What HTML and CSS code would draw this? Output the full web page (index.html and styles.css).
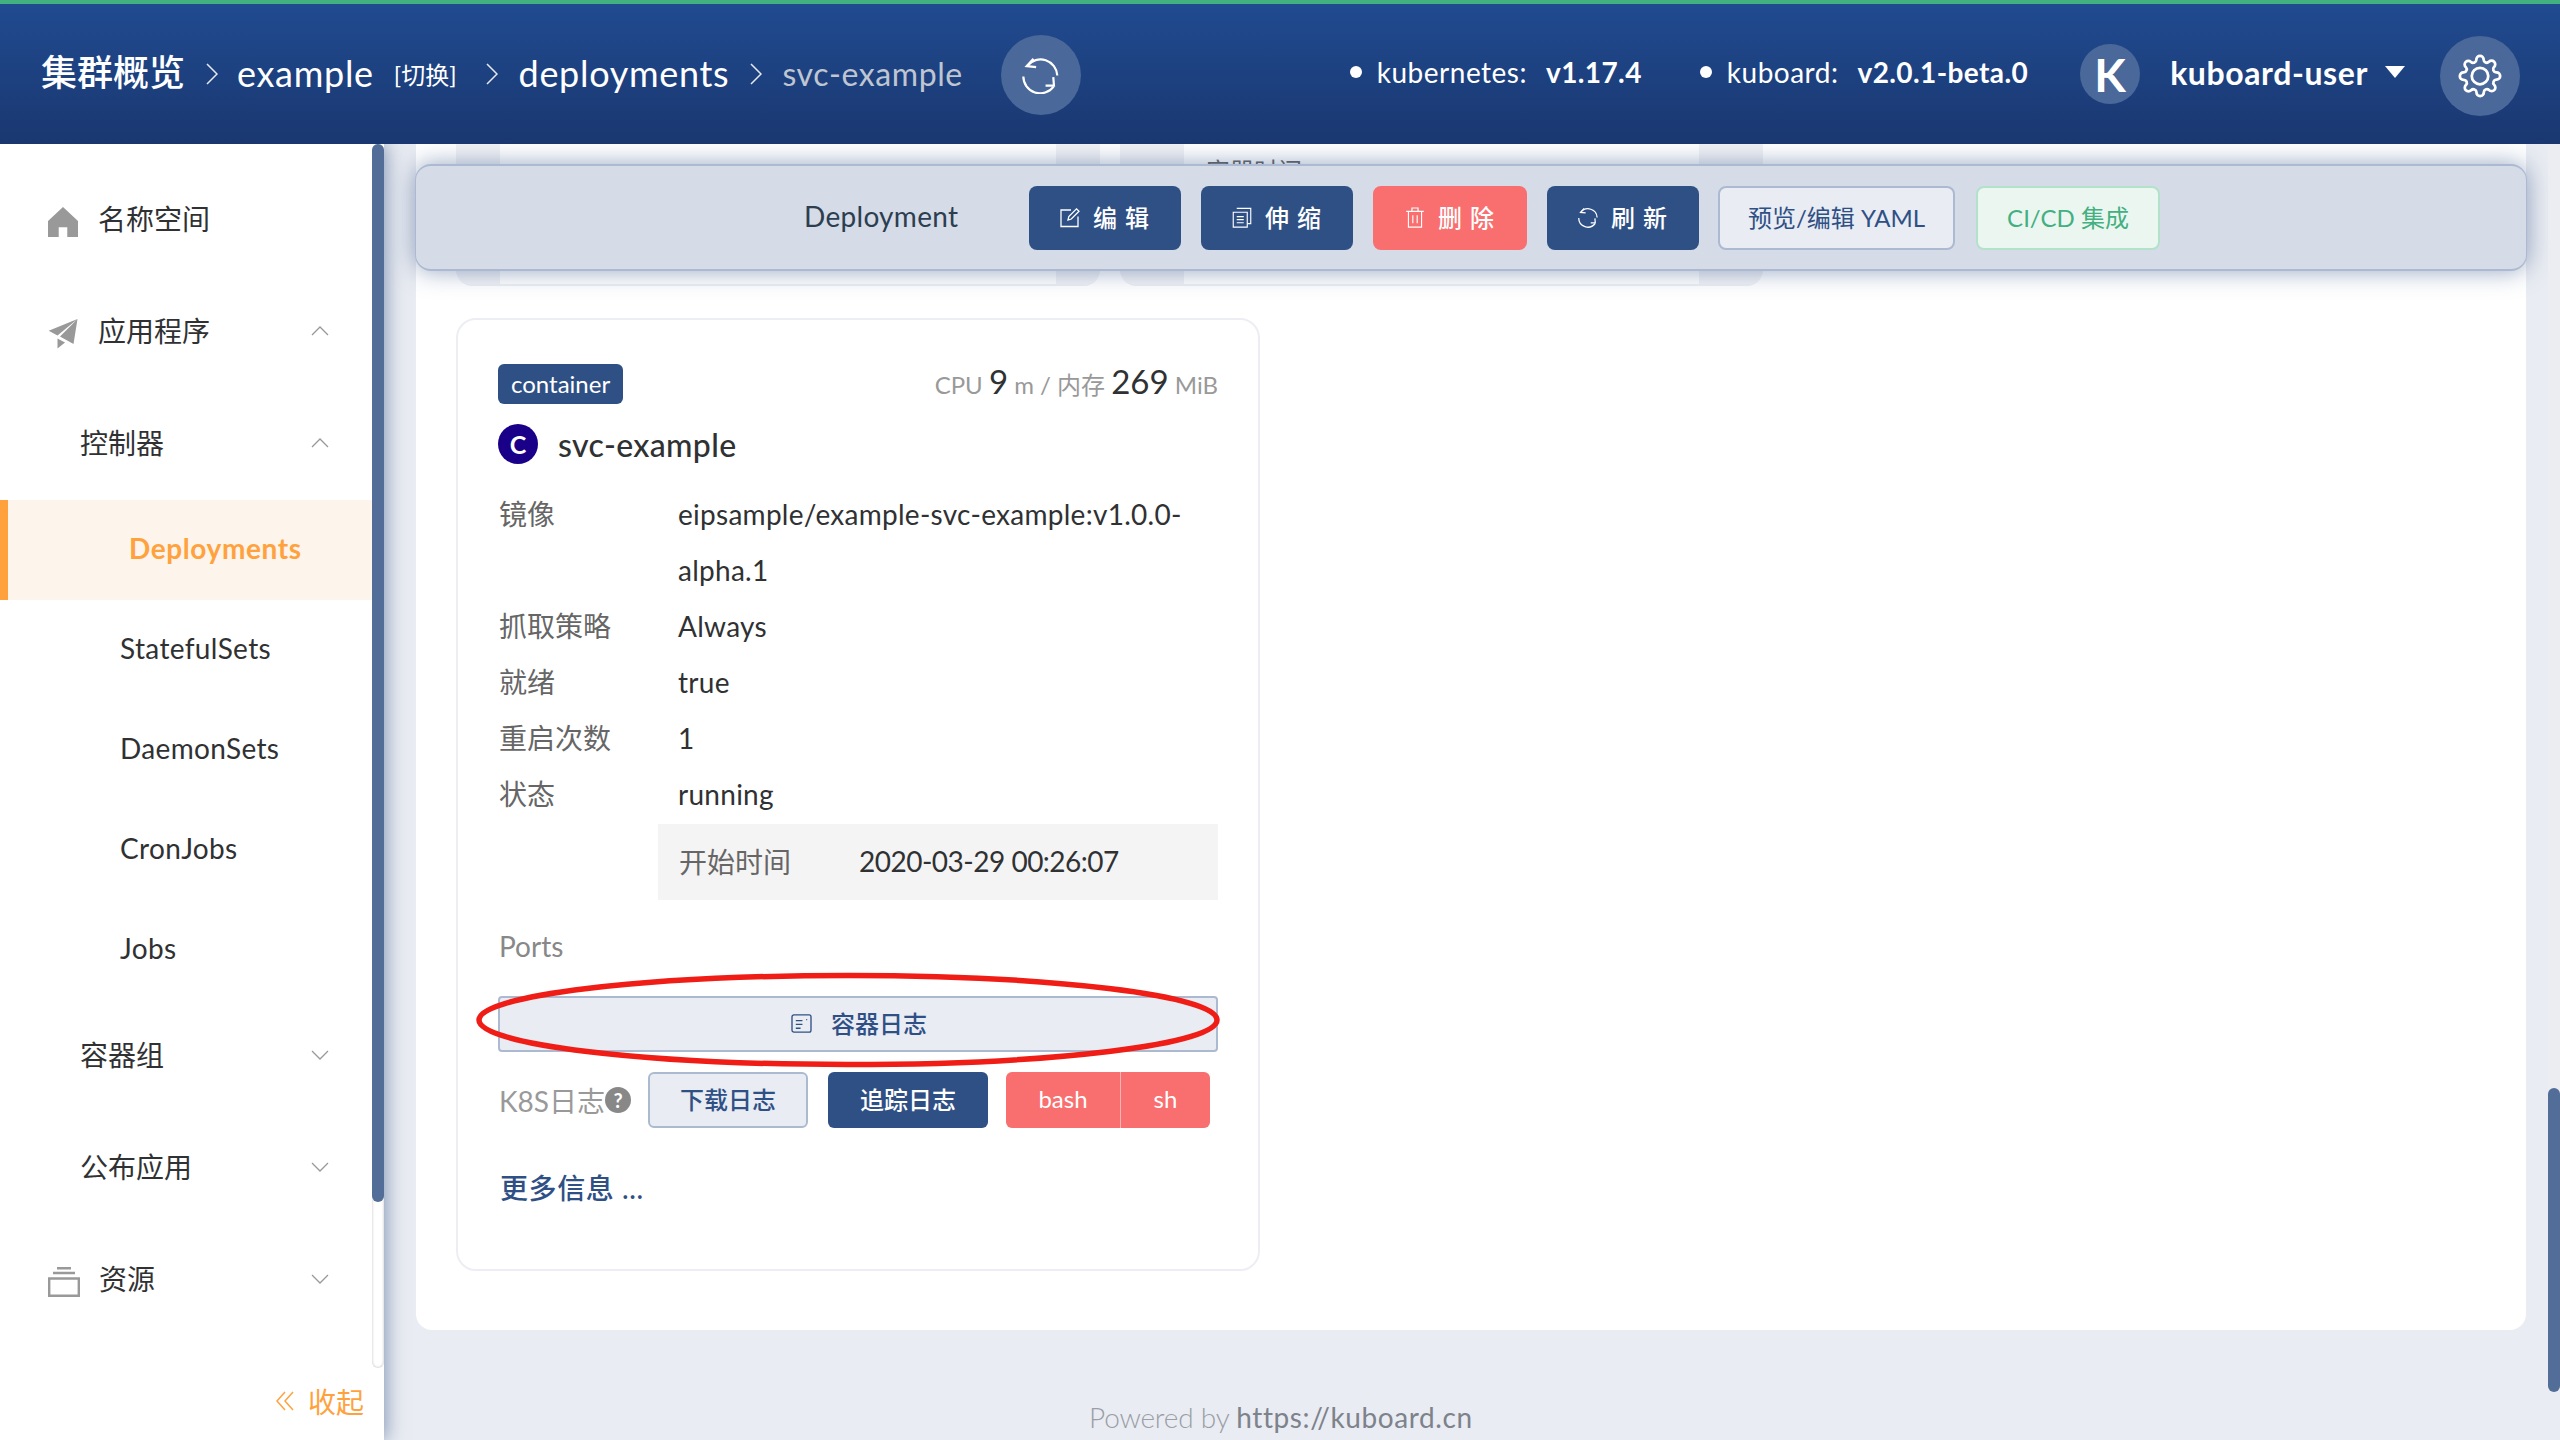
FILE: index.html
```html
<!DOCTYPE html>
<html lang="zh">
<head>
<meta charset="utf-8">
<title>Kuboard</title>
<link rel="stylesheet" href="styles.css">
</head>
<body>
<div class="app">
  <header class="topbar">
    <nav class="crumbs">
      <span class="crumb-root">集群概览</span>
      <svg class="crumb-sep sep-first" viewBox="0 0 12 24"><path d="M1 2l10 10L1 22"/></svg>
      <span class="crumb">example</span>
      <span class="crumb-switch">[切换]</span>
      <svg class="crumb-sep sep-wide" viewBox="0 0 12 24"><path d="M1 2l10 10L1 22"/></svg>
      <span class="crumb">deployments</span>
      <svg class="crumb-sep sep-last" viewBox="0 0 12 24"><path d="M1 2l10 10L1 22"/></svg>
      <span class="crumb-last">svc-example</span>
      <button class="round-btn refresh-top">
        <svg class="ic-refresh-lg" viewBox="70 70 110 110"><path d="M86 96A50 50 0 0 1 175 125"/><path d="M104 75L84 97L112 100"/><path d="M74 128A50 50 0 0 0 164 158"/><path d="M140 155L165 155L163 130"/></svg>
      </button>
    </nav>
    <div class="top-right">
      <span class="dot"></span><span class="ver-key">kubernetes:</span><span class="ver-val">v1.17.4</span>
      <span class="dot dot-2"></span><span class="ver-key">kuboard:</span><span class="ver-val">v2.0.1-beta.0</span>
      <span class="avatar">K</span>
      <span class="user">kuboard-user</span>
      <span class="caret"></span>
      <button class="round-btn gear-btn">
        <svg class="ic-gear" viewBox="0 0 24 24"><circle cx="12" cy="12" r="4.500"/><path d="M19.400 15a1.650 1.650 0 0 0 .33 1.820l.06.06a2 2 0 0 1 0 2.830 2 2 0 0 1-2.830 0l-.06-.06a1.650 1.650 0 0 0-1.820-.33 1.650 1.650 0 0 0-1 1.510V21a2 2 0 0 1-2 2 2 2 0 0 1-2-2v-.09A1.650 1.650 0 0 0 9 19.400a1.650 1.650 0 0 0-1.820.33l-.06.06a2 2 0 0 1-2.830 0 2 2 0 0 1 0-2.830l.06-.06a1.650 1.650 0 0 0 .33-1.820 1.650 1.650 0 0 0-1.510-1H3a2 2 0 0 1-2-2 2 2 0 0 1 2-2h.09A1.650 1.650 0 0 0 4.600 9a1.650 1.650 0 0 0-.33-1.820l-.06-.06a2 2 0 0 1 0-2.830 2 2 0 0 1 2.830 0l.06.06a1.650 1.650 0 0 0 1.820.33H9a1.650 1.650 0 0 0 1-1.510V3a2 2 0 0 1 2-2 2 2 0 0 1 2 2v.09a1.650 1.650 0 0 0 1 1.510 1.650 1.650 0 0 0 1.820-.33l.06-.06a2 2 0 0 1 2.830 0 2 2 0 0 1 0 2.830l-.06.06a1.650 1.650 0 0 0-.33 1.820V9a1.650 1.650 0 0 0 1.510 1H21a2 2 0 0 1 2 2 2 2 0 0 1-2 2h-.09a1.650 1.650 0 0 0-1.510 1z"/></svg>
      </button>
    </div>
  </header>

  <div class="body-row">
    <aside class="sidebar">
      <ul class="menu">
        <li class="mi mi-top">
          <svg class="mi-icon" viewBox="0 0 28 28"><path d="M14 0L28 13V28H18V19H10V28H0V13Z"/></svg>
          <span>名称空间</span>
        </li>
        <li class="mi mi-top">
          <svg class="mi-icon" viewBox="0 0 30 30"><path d="M29.500 0L0.700 11.700L9.500 16.500ZM29.500 0L12 17.500L25.500 25ZM9.500 19.500V29.500L17 23.500Z"/></svg>
          <span>应用程序</span>
          <svg class="chev" viewBox="0 0 18 10"><path d="M1 9l8-8 8 8"/></svg>
        </li>
        <li class="mi mi-group">
          <span>控制器</span>
          <svg class="chev" viewBox="0 0 18 10"><path d="M1 9l8-8 8 8"/></svg>
        </li>
        <li class="sub active">Deployments</li>
        <li class="sub">StatefulSets</li>
        <li class="sub">DaemonSets</li>
        <li class="sub">CronJobs</li>
        <li class="sub">Jobs</li>
        <li class="mi mi-group">
          <span>容器组</span>
          <svg class="chev" viewBox="0 0 18 10"><path d="M1 1l8 8 8-8"/></svg>
        </li>
        <li class="mi mi-group">
          <span>公布应用</span>
          <svg class="chev" viewBox="0 0 18 10"><path d="M1 1l8 8 8-8"/></svg>
        </li>
        <li class="mi mi-top">
          <svg class="mi-icon mi-res" viewBox="0 0 32 30"><path d="M1.200 11.500H30.800V28.800H1.200ZM5 6H27M9 1.200H23"/></svg>
          <span>资源</span>
          <svg class="chev" viewBox="0 0 18 10"><path d="M1 1l8 8 8-8"/></svg>
        </li>
      </ul>
      <div class="collapse">
        <svg class="collapse-ic" viewBox="0 0 18 20"><path d="M9 1L1 10l8 9M17 1L9 10l8 9"/></svg>
        <span>收起</span>
      </div>
      <div class="side-track"><div class="side-thumb"></div></div>
    </aside>

    <main class="main">
      <section class="panel">
        <div class="peek-row">
          <div class="peek-card"><div class="peek-cell"></div><div class="peek-fill"></div><div class="peek-cell peek-end"></div></div>
          <div class="peek-card peek-card-2"><div class="peek-cell peek-wide"></div><div class="peek-fill"><span class="peek-text">容器时间 ...</span></div><div class="peek-cell peek-wide"></div></div>
        </div>

        <article class="container-card">
          <div class="card-top">
            <span class="tag">container</span>
            <span class="usage">CPU <b>9</b> m / 内存 <b>269</b> MiB</span>
          </div>
          <div class="name-row">
            <span class="c-badge">C</span>
            <span class="c-name">svc-example</span>
          </div>
          <dl class="props">
            <dt>镜像</dt><dd>eipsample/example-svc-example:v1.0.0-<br>alpha.1</dd>
            <dt>抓取策略</dt><dd>Always</dd>
            <dt>就绪</dt><dd>true</dd>
            <dt>重启次数</dt><dd>1</dd>
            <dt>状态</dt><dd>running</dd>
          </dl>
          <div class="state-box"><span class="state-key">开始时间</span><span class="state-val">2020-03-29 00:26:07</span></div>
          <div class="ports">Ports</div>
          <div class="log-wrap">
            <button class="btn-log">
              <svg class="ic-log" viewBox="0 0 22 20"><rect x="1" y="1" width="20" height="18" rx="2"/><path d="M5 7h7M5 11h7M5 15h5M16 6h1"/></svg>
              <span>容器日志</span>
            </button>
            <svg class="ring" viewBox="0 0 744 96" preserveAspectRatio="none"><ellipse cx="372" cy="48" rx="369" ry="44.500"/></svg>
          </div>
          <div class="k8s-row">
            <span class="k8s-label">K8S日志</span>
            <span class="help">?</span>
            <button class="btn-sm btn-ghost">下载日志</button>
            <button class="btn-sm btn-solid">追踪日志</button>
            <div class="btn-group">
              <button class="btn-sm btn-red btn-bash">bash</button>
              <button class="btn-sm btn-red btn-sh">sh</button>
            </div>
          </div>
          <a class="more">更多信息 ...</a>
        </article>

        <div class="toolbar">
          <span class="tb-title">Deployment</span>
          <button class="tb-btn tb-primary">
            <svg class="tb-ic" viewBox="0 0 20 20"><path d="M11 2.500H1V19H18V9"/><path d="M8 12.500L8.800 9 16.500 1.300 19 3.800 11.300 11.500Z"/></svg>
            <span>编 辑</span>
          </button>
          <button class="tb-btn tb-primary">
            <svg class="tb-ic" viewBox="0 0 22 24"><path d="M1 6H17V23H1Z"/><path d="M5 1.500H21V19H17"/><path d="M5 11H13M5 14.500H13M5 18H13"/></svg>
            <span>伸 缩</span>
          </button>
          <button class="tb-btn tb-danger">
            <svg class="tb-ic" viewBox="0 0 20 24"><path d="M0 5H20M6.500 5V1.200H13.500V5M2.500 5V23H17.500V5M7.500 9.500V18.500M12.500 9.500V18.500"/></svg>
            <span>删 除</span>
          </button>
          <button class="tb-btn tb-primary">
            <svg class="tb-ic tb-ic-refresh" viewBox="70 70 110 110"><path d="M86 96A50 50 0 0 1 175 125"/><path d="M104 75L84 97L112 100"/><path d="M74 128A50 50 0 0 0 164 158"/><path d="M140 155L165 155L163 130"/></svg>
            <span>刷 新</span>
          </button>
          <button class="tb-btn tb-outline">预览/编辑 YAML</button>
          <button class="tb-btn tb-green">CI/CD 集成</button>
        </div>
      </section>
      <footer class="foot">Powered by <a class="foot-link">https://kuboard.cn</a></footer>
      <div class="main-track"><div class="main-thumb"></div></div>
    </main>
  </div>
</div>
</body>
</html>
```

FILE: styles.css
```css
* { box-sizing: border-box; }
html, body { margin: 0; padding: 0; height: 100%; overflow: hidden; }
body {
  font-family: Lato, "Noto Sans CJK SC", sans-serif;
  font-size: 28px;
  color: #2c3e50;
  background: #e9ecf2;
}
button { font-family: inherit; cursor: pointer; }
.app { display: flex; flex-direction: column; width: 2560px; height: 1440px; }

/* top bar */
.topbar {
  flex: 0 0 144px;
  position: relative;
  z-index: 5;
  display: flex;
  align-items: center;
  justify-content: space-between;
  border-top: 4px solid #42b07f;
  background: linear-gradient(180deg, #204b90 0%, #1a3770 100%);
  color: #fff;
  padding: 0 40px 0 41px;
}
.crumbs { display: flex; align-items: center; margin-top: -2px; }
.crumb-root { font-size: 36px; font-weight: 500; margin-bottom: 6px; }
.crumb { font-size: 36px; letter-spacing: .7px; }
.crumb-switch { font-size: 24px; margin-left: 20px; }
.crumb-last { font-size: 32px; color: #bfc6d2; letter-spacing: .6px; }
.crumb-sep { width: 12px; height: 24px; margin: 2px 21px 0; fill: none; stroke: #e6eaf2; stroke-width: 1.500; }
.sep-first { margin-right: 19px; }
.sep-wide { margin-left: 29px; }
.sep-last { margin-right: 20px; }
.round-btn {
  display: flex;
  align-items: center;
  justify-content: center;
  width: 80px;
  height: 80px;
  border: 0;
  padding: 0;
  border-radius: 50%;
  background: #4a6899;
}
.refresh-top { margin: 4px 0 0 38px; }
.ic-refresh-lg { width: 37px; height: 37px; fill: none; stroke: #fff; stroke-width: 6.500; }
.top-right { display: flex; align-items: center; }
.dot { width: 12px; height: 12px; border-radius: 50%; background: #fff; margin: -4px 15px 0 0; }
.dot-2 { margin-left: 58px; }
.ver-key { font-size: 28px; margin: -4px 19px 0 0; letter-spacing: .5px; }
.ver-val { font-size: 28px; font-weight: 700; margin-top: -4px; letter-spacing: .4px; }
.avatar {
  display: flex;
  align-items: center;
  justify-content: center;
  width: 60px;
  height: 60px;
  margin-left: 52px;
  border-radius: 50%;
  background: #4a6899;
  font-size: 46px;
  font-weight: 700;
}
.user { font-size: 32px; font-weight: 700; margin: -4px 0 0 30px; letter-spacing: .6px; }
.caret {
  width: 0;
  height: 0;
  margin: -4px 0 0 17px;
  border-left: 10px solid transparent;
  border-right: 10px solid transparent;
  border-top: 12px solid #fff;
}
.gear-btn { margin: 4px 0 0 35px; }
.ic-gear { width: 44px; height: 44px; fill: none; stroke: #fff; stroke-width: 1.500; }

/* layout */
.body-row { flex: 1; display: flex; min-height: 0; }

/* sidebar */
.sidebar {
  position: relative;
  z-index: 3;
  flex: 0 0 384px;
  display: flex;
  flex-direction: column;
  background: #fff;
  box-shadow: 2px 0 18px rgba(47, 80, 133, .55);
}
.menu { list-style: none; margin: 0; padding: 20px 0 0; width: 372px; flex: 1; }
.mi {
  display: flex;
  align-items: center;
  height: 112px;
  position: relative;
  padding-bottom: 4px;
  font-size: 28px;
  color: #303133;
}
.mi-top { padding-left: 48px; }
.mi-group { padding-left: 80px; padding-bottom: 5px; }
.mi-icon { width: 30px; height: 30px; margin: 8px 20px 0 0; fill: #999; }
.mi-res { width: 32px; margin-right: 19px; fill: none; stroke: #999; stroke-width: 2.400; }
.chev { position: absolute; right: 43px; top: 50%; width: 18px; height: 10px; margin-top: -6px; fill: none; stroke: #999; stroke-width: 1.300; }
.sub {
  display: flex;
  align-items: center;
  height: 100px;
  padding: 0 0 5px 120px;
  font-size: 28px;
  color: #303133;
  letter-spacing: .35px;
}
.active {
  border-left: 8px solid #ffa23d;
  padding-left: 121px;
  background: #fdf4ec;
  color: #ffa23d;
  font-weight: 700;
  letter-spacing: .6px;
}
.collapse {
  display: flex;
  align-items: center;
  justify-content: flex-end;
  height: 72px;
  padding: 0 20px 2px 0;
  margin-bottom: 2px;
  color: #ffa23d;
  font-size: 28px;
}
.collapse-ic { width: 18px; height: 20px; margin-right: 14px; fill: none; stroke: #ffa23d; stroke-width: 1.500; }
.side-track {
  position: absolute;
  top: 0;
  right: 0;
  width: 12px;
  height: 1224px;
  border-radius: 6px;
  background: #fff;
  box-shadow: inset 0 0 3px rgba(0, 0, 0, .25);
}
.side-thumb { height: 1058px; border-radius: 6px; background: #526d97; }

/* main */
.main { position: relative; flex: 1; min-width: 0; padding-left: 32px; display: flex; flex-direction: column; }
.panel {
  position: relative;
  width: 2110px;
  height: 1186px;
  background: #fff;
  border-radius: 0 0 16px 16px;
  padding: 0 40px;
}
.peek-row { display: flex; gap: 20px; height: 142px; margin-bottom: 32px; }
.peek-card { display: flex; width: 644px; height: 142px; border-radius: 0 0 16px 16px; border-bottom: 2px solid #eef0f4; overflow: hidden; }
.peek-card-2 { width: 643px; }
.peek-cell { width: 44px; background: #f1f2f5; }
.peek-wide { width: 64px; }
.peek-fill { flex: 1; position: relative; }
.peek-text { position: absolute; left: 22px; top: 8px; font-size: 24px; color: #666; white-space: nowrap; }

.toolbar {
  position: absolute;
  left: -1px;
  right: -1px;
  top: 20px;
  height: 107px;
  display: flex;
  align-items: center;
  padding-left: 388px;
  background: #d5dbe7;
  border: 2px solid #acbad1;
  border-width: 2px 1px;
  border-radius: 16px;
  box-shadow: 0 0 24px rgba(47, 80, 133, .5);
}
.tb-title { width: 225px; padding-bottom: 3px; font-size: 28px; color: #2c3e50; letter-spacing: .3px; }
.tb-btn {
  display: flex;
  align-items: center;
  justify-content: center;
  height: 64px;
  margin-right: 20px;
  border: 0;
  padding: 0 0 2px;
  border-radius: 8px;
  color: #fff;
  font-size: 24px;
  font-weight: 500;
}
.tb-btn span { letter-spacing: 1px; }
.tb-primary { width: 152px; background: #2f5085; }
.tb-danger { width: 154px; background: #f96e6e; }
.tb-ic { width: 20px; height: 21px; margin: 2px 13px 0 0; fill: none; stroke: #fff; stroke-width: 1.300; }
.tb-ic-refresh { stroke-width: 7; }
.tb-outline { width: 237px; margin-left: -1px; background: #e9ecf3; color: #2f5085; border: 2px solid #acbad1; font-weight: 400; }
.tb-green { width: 184px; margin-left: 1px; background: #ecf6f1; color: #42b07f; border: 2px solid #b2e2ca; font-weight: 400; }

/* container card */
.container-card {
  width: 804px;
  height: 953px;
  border: 2px solid #eceef4;
  border-radius: 20px;
  padding: 44px 40px 0;
}
.card-top { display: flex; align-items: center; justify-content: space-between; height: 40px; }
.tag {
  display: flex;
  align-items: center;
  height: 40px;
  padding: 0 13px 2px;
  border-radius: 6px;
  background: #2f5085;
  color: #fff;
  font-size: 24px;
}
.usage { font-size: 24px; color: #999; margin-top: -6px; }
.usage b { font-size: 33px; font-weight: 400; color: #303133; }
.name-row { display: flex; align-items: center; height: 40px; margin-top: 20px; }
.c-badge {
  display: flex;
  align-items: center;
  justify-content: center;
  width: 40px;
  height: 40px;
  border-radius: 50%;
  background: #1a0088;
  color: #fff;
  font-size: 25px;
  font-weight: 700;
}
.c-name { margin-left: 20px; font-size: 32px; font-weight: 500; color: #303133; letter-spacing: .35px; }
.props { display: grid; grid-template-columns: 180px 1fr; margin: 22px 0 0; line-height: 56px; font-size: 28px; }
.props dt { color: #666; padding-left: 1px; }
.props dd { margin: 0; color: #303133; letter-spacing: .27px; }
.state-box {
  display: flex;
  align-items: center;
  height: 76px;
  margin: 2px 0 0 160px;
  padding: 0 0 3px 21px;
  background: #f4f4f4;
  color: #303133;
  font-size: 28px;
}
.state-key { width: 180px; color: #666; }
.state-val { letter-spacing: -.5px; }
.ports { margin-top: 18px; padding-left: 1px; line-height: 56px; color: #888; font-size: 28px; }
.log-wrap { position: relative; margin-top: 22px; }
.btn-log {
  display: flex;
  align-items: center;
  justify-content: center;
  width: 720px;
  height: 56px;
  padding: 0 0 3px 2px;
  border: 2px solid #acbad1;
  border-radius: 4px;
  background: #e9ecf3;
  color: #2f5085;
  font-size: 24px;
  font-weight: 500;
}
.ic-log { width: 21px; height: 19px; margin: 2px 19px 0 0; fill: none; stroke: #2f5085; stroke-width: 1.400; }
.ring { position: absolute; left: -22px; top: -24px; width: 744px; height: 96px; fill: none; stroke: #f01d16; stroke-width: 5.500; pointer-events: none; }
.k8s-row { display: flex; align-items: center; height: 56px; margin-top: 20px; }
.k8s-label { font-size: 28px; color: #999; padding: 0 0 1px 1px; }
.help {
  display: flex;
  align-items: center;
  justify-content: center;
  width: 26px;
  height: 26px;
  margin: 0 17px 0 0;
  border-radius: 50%;
  background: #888;
  color: #fff;
  font-size: 20px;
  font-weight: 700;
}
.btn-sm {
  height: 56px;
  width: 160px;
  padding: 0 0 3px;
  border: 0;
  border-radius: 6px;
  font-size: 24px;
  font-weight: 500;
}
.btn-ghost { background: #e9ecf3; border: 2px solid #acbad1; color: #2f5085; }
.btn-solid { margin-left: 20px; background: #2f5085; color: #fff; }
.btn-group { display: flex; margin-left: 18px; }
.btn-red { background: #f96e6e; color: #fff; font-weight: 400; }
.btn-bash { width: 115px; border-radius: 6px 0 0 6px; border-right: 1px solid #fbb4b4; }
.btn-sh { width: 89px; border-radius: 0 6px 6px 0; }
.more { display: block; margin-top: 32px; line-height: 56px; padding-left: 2px; color: #2f5085; font-size: 28px; font-weight: 500; letter-spacing: .6px; }

/* footer */
.foot {
  flex: 1;
  padding: 67px 0 0 673px;
  font-size: 28px;
  line-height: 40px;
  font-weight: 300;
  color: #9a9ea6;
  letter-spacing: -.2px;
}
.foot-link { color: #7d828b; font-weight: 400; letter-spacing: .6px; }

.main-track {
  position: absolute;
  top: 0;
  right: 0;
  width: 12px;
  height: 1248px;
  border-radius: 6px;
  background: #ecedf0;
  display: flex;
  align-items: flex-end;
}
.main-thumb { width: 12px; height: 304px; border-radius: 6px; background: #526d97; }
```
